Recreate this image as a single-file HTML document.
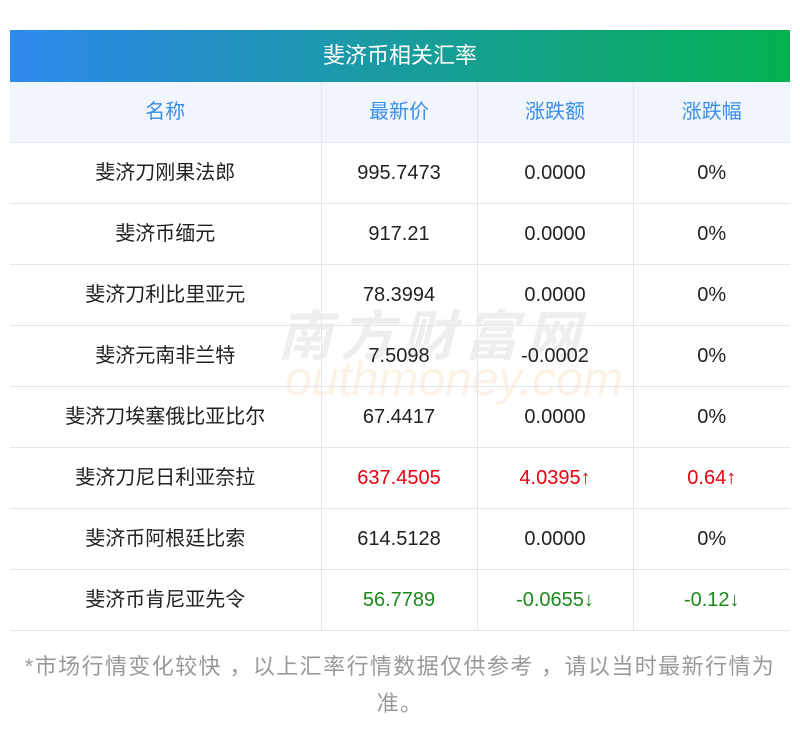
<!DOCTYPE html>
<html><head><meta charset="utf-8"><style>
body{margin:0;width:800px;height:733px;background:#fff;font-family:"Liberation Sans","Noto Sans CJK SC",sans-serif;position:relative;overflow:hidden}
.title{position:absolute;left:10px;top:30px;width:780px;height:52px;background:linear-gradient(90deg,#2f88ee,#03b050);color:#fff;font-size:22px;line-height:52px;text-align:center}
table{position:absolute;left:10px;top:82px;width:780px;border-collapse:collapse;table-layout:fixed}
td,th{height:60px;border:1px solid #e3e6ee;text-align:center;font-size:20px;line-height:24px;font-weight:normal;color:#222;padding:0;vertical-align:middle}
th{background:#f1f6fe;color:#3a8ee6}
tr:first-child th{border-top:none}
tr td:first-child,tr th:first-child{border-left:none}
tr td:last-child,tr th:last-child{border-right:none}
.r{color:#e8000d}.g{color:#1a8a1a}
.note{position:absolute;left:0;top:648px;width:800px;text-align:center;color:#999;font-size:22px;line-height:37px;white-space:nowrap;letter-spacing:1.4px}
.wm{position:absolute;left:278px;top:292px;font-size:54px;color:rgba(200,200,200,0.3);font-weight:bold;letter-spacing:8px;font-style:italic}
.wm2{position:absolute;left:285px;top:352px;font-size:48px;color:rgba(240,200,150,0.25);font-style:italic}
</style></head><body>
<div class="title">斐济币相关汇率</div>
<div class="wm">南方财富网</div>
<div class="wm2">outhmoney.com</div>
<table>
<colgroup><col style="width:311px"><col style="width:156px"><col style="width:156px"><col style="width:157px"></colgroup>
<tr><th>名称</th><th>最新价</th><th>涨跌额</th><th>涨跌幅</th></tr>
<tr><td>斐济刀刚果法郎</td><td>995.7473</td><td>0.0000</td><td>0%</td></tr>
<tr><td>斐济币缅元</td><td>917.21</td><td>0.0000</td><td>0%</td></tr>
<tr><td>斐济刀利比里亚元</td><td>78.3994</td><td>0.0000</td><td>0%</td></tr>
<tr><td>斐济元南非兰特</td><td>7.5098</td><td>-0.0002</td><td>0%</td></tr>
<tr><td>斐济刀埃塞俄比亚比尔</td><td>67.4417</td><td>0.0000</td><td>0%</td></tr>
<tr><td>斐济刀尼日利亚奈拉</td><td class="r">637.4505</td><td class="r">4.0395↑</td><td class="r">0.64↑</td></tr>
<tr><td>斐济币阿根廷比索</td><td>614.5128</td><td>0.0000</td><td>0%</td></tr>
<tr><td>斐济币肯尼亚先令</td><td class="g">56.7789</td><td class="g">-0.0655↓</td><td class="g">-0.12↓</td></tr>
</table>
<div class="note">*市场行情变化较快 ，以上汇率行情数据仅供参考 ，请以当时最新行情为<br>准。</div>
</body></html>
